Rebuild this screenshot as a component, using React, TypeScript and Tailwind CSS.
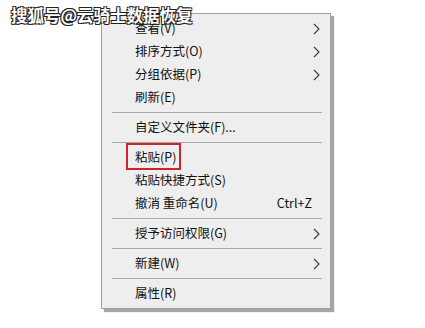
import React from 'react';

type Entry =
  | { kind: 'item'; label: string; sub?: boolean; shortcut?: string; marked?: boolean }
  | { kind: 'sep' };

const entries: Entry[] = [
  { kind: 'item', label: '查看(V)', sub: true },
  { kind: 'item', label: '排序方式(O)', sub: true },
  { kind: 'item', label: '分组依据(P)', sub: true },
  { kind: 'item', label: '刷新(E)' },
  { kind: 'sep' },
  { kind: 'item', label: '自定义文件夹(F)...' },
  { kind: 'sep' },
  { kind: 'item', label: '粘贴(P)', marked: true },
  { kind: 'item', label: '粘贴快捷方式(S)' },
  { kind: 'item', label: '撤消 重命名(U)', shortcut: 'Ctrl+Z' },
  { kind: 'sep' },
  { kind: 'item', label: '授予访问权限(G)', sub: true },
  { kind: 'sep' },
  { kind: 'item', label: '新建(W)', sub: true },
  { kind: 'sep' },
  { kind: 'item', label: '属性(R)' },
];

const Chevron = () => (
  <svg width="7" height="12" viewBox="0 0 7 12" className="block">
    <polyline points="1,1 6,6 1,11" fill="none" stroke="#3a3a3a" strokeWidth="1.1" />
  </svg>
);

export default function App() {
  return (
    <div
      className="relative w-[425px] h-[328px] overflow-hidden bg-white pl-[101px] pt-[13px]"
      style={{ fontFamily: '"Noto Sans CJK SC", "Noto Sans", sans-serif' }}
    >
      <div className="w-[230px] bg-[#eeeeee] border border-[#a0a0a0] py-[3px] shadow-[3px_3px_1px_rgba(0,0,0,0.35)]">
        {entries.map((e, i) =>
          e.kind === 'sep' ? (
            <div key={i} className="h-[7px] flex items-center pl-[10px] pr-[8px]">
              <div className="h-px w-full bg-[#a8a8a8]" />
            </div>
          ) : (
            <div key={i} className="relative h-[23px] flex items-center pl-[33px] pr-[10px] text-[12.5px] text-[#111]">
              <span className="flex-1 leading-none">{e.label}</span>
              {e.shortcut && <span className="leading-none mr-[8px]">{e.shortcut}</span>}
              {e.sub && (
                <span>
                  <Chevron />
                </span>
              )}
              {e.marked && (
                <div className="absolute left-[24px] top-[-3px] w-[55px] h-[27px] border-2 border-[#d3232a]" />
              )}
            </div>
          )
        )}
      </div>
      <div className="absolute left-[11px] top-[5px] text-[16.5px] font-bold leading-[20px] text-white [text-shadow:1px_1px_0_#222,-1px_-1px_0_#222,1px_-1px_0_#222,-1px_1px_0_#222]">
        搜狐号@云骑士数据恢复
      </div>
    </div>
  );
}
